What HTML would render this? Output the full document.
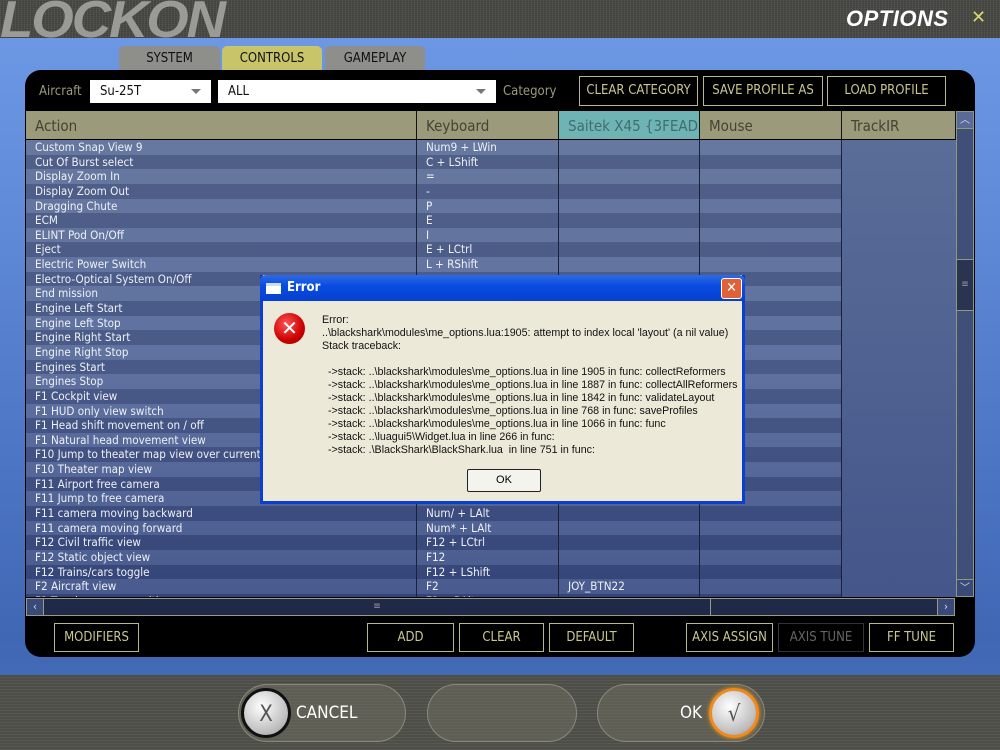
<!DOCTYPE html>
<html><head><meta charset="utf-8">
<style>
*{margin:0;padding:0;box-sizing:border-box}
body{width:1000px;height:750px;overflow:hidden;position:relative;font-family:"DejaVu Sans Condensed","DejaVu Sans","Liberation Sans",sans-serif;font-stretch:condensed;background:linear-gradient(180deg,#6f9ae6 0%,#5f8ad8 30%,#4d76c4 60%,#3f67b4 85%,#4a6fb8 100%)}
.abs{position:absolute}
.top{left:0;top:0;width:1000px;height:38px;background:#4a4a46;background-image:repeating-linear-gradient(90deg,rgba(255,255,255,.05) 0 1px,transparent 1px 3px),repeating-linear-gradient(0deg,rgba(0,0,0,.1) 0 1px,transparent 1px 2px)}
.logo{left:0;top:-10px;font:italic 900 52px "Liberation Sans",sans-serif;color:#9a9a96;letter-spacing:-2px;transform:scaleX(1.05);transform-origin:left}
.opt{left:846px;top:6px;font:italic bold 22px "Liberation Sans",sans-serif;color:#fff;letter-spacing:.5px}
.x{left:971px;top:7px;color:#d8d870;font:18px "DejaVu Sans",sans-serif}
.tab{top:46px;height:25px;background:#8e8e8a;border-radius:5px 5px 0 0;font-size:13px;color:#111;text-align:center;line-height:25px}
.panel{left:25px;top:70px;width:950px;height:587px;background:#000;border-radius:16px}
.lbl{color:#9a9a7c;font-size:13px}
.sel{background:#fff;height:23px;top:80px;font-size:13px;line-height:23px;padding-left:10px;color:#111}
.arr{position:absolute;right:10px;top:9px;width:0;height:0;border-left:5px solid transparent;border-right:5px solid transparent;border-top:5px solid #777}
.btn{border:1px solid #b8b88a;color:#c9c790;font-size:13px;text-align:center;background:#000;white-space:nowrap}
.hdr{top:111px;height:28px;background:#9b9a7a;color:#444434;font-size:15px;line-height:30px;padding-left:9px;border-right:1px solid #111}
.rows{left:26px;top:140px;width:930px;height:457px;overflow:hidden;background:linear-gradient(180deg,#5d709a 0%,#56699a 50%,#3e5088 100%)}
.r{height:14.65px;display:flex;font-size:11.6px;color:#eef0f6;line-height:14.65px;white-space:nowrap}
.r:nth-child(odd){background:rgba(255,255,255,.06)}
.r:nth-child(even){background:rgba(0,0,30,.14)}
.r span{display:block;overflow:hidden;padding-left:9px;border-right:1px solid #1a2238}
.c1{width:391px}.c2{width:142px}.c3{width:141px}.c4{width:142px}
.trk{left:842px;top:140px;width:114px;height:457px;background:linear-gradient(180deg,#5a6d98,#44568a)}
.dlg{left:260px;top:275px;width:485px;height:229px;background:#ece9d8;border:3px solid #0a3fd0;border-top:none}
.tb{left:-3px;top:0;width:485px;height:26px;background:linear-gradient(180deg,#2e6be6,#0a4ce0 40%,#0540d0);border-radius:6px 6px 0 0}
.bot{left:0;top:675px;width:1000px;height:75px;background:#4e4e48;background-image:repeating-linear-gradient(0deg,rgba(255,255,255,.06) 0 1px,transparent 1px 3px)}
.pill{top:684px;height:58px;border-radius:29px;border:1px solid #8a8a7a;background:rgba(110,110,96,.5)}
.circ{width:50px;height:50px;border-radius:25px;background:radial-gradient(circle at 40% 35%,#fff,#bbb 70%,#888);font-size:22px;text-align:center;line-height:48px;color:#555}
</style></head><body>
<div class="abs top"></div>
<div class="abs logo">LOCKON</div>
<div class="abs opt">OPTIONS</div>
<div class="abs x">✕</div>

<div class="abs tab" style="left:119px;width:101px">SYSTEM</div>
<div class="abs tab" style="left:222px;width:100px;background:#c8c46a">CONTROLS</div>
<div class="abs tab" style="left:325px;width:100px">GAMEPLAY</div>

<div class="abs panel"></div>
<div class="abs lbl" style="left:39px;top:84px">Aircraft</div>
<div class="abs sel" style="left:90px;width:121px">Su-25T<div class="arr"></div></div>
<div class="abs sel" style="left:218px;width:278px">ALL<div class="arr"></div></div>
<div class="abs lbl" style="left:503px;top:84px">Category</div>
<div class="abs btn" style="left:579px;top:76px;width:119px;height:30px;line-height:28px">CLEAR CATEGORY</div>
<div class="abs btn" style="left:703px;top:76px;width:120px;height:30px;line-height:28px">SAVE PROFILE AS</div>
<div class="abs btn" style="left:827px;top:76px;width:119px;height:30px;line-height:28px">LOAD PROFILE</div>

<div class="abs hdr" style="left:26px;width:391px">Action</div>
<div class="abs hdr" style="left:417px;width:142px">Keyboard</div>
<div class="abs hdr" style="left:559px;width:141px;background:#6fb4b4;color:#3f6e70;white-space:nowrap;overflow:hidden">Saitek X45 {3FEAD</div>
<div class="abs hdr" style="left:700px;width:142px">Mouse</div>
<div class="abs hdr" style="left:842px;width:114px">TrackIR</div>

<div class="abs rows">
<div class="r"><span class="c1">Custom Snap View  9</span><span class="c2">Num9 + LWin</span><span class="c3"></span><span class="c4"></span></div>
<div class="r"><span class="c1">Cut Of Burst select</span><span class="c2">C + LShift</span><span class="c3"></span><span class="c4"></span></div>
<div class="r"><span class="c1">Display Zoom In</span><span class="c2">=</span><span class="c3"></span><span class="c4"></span></div>
<div class="r"><span class="c1">Display Zoom Out</span><span class="c2">-</span><span class="c3"></span><span class="c4"></span></div>
<div class="r"><span class="c1">Dragging Chute</span><span class="c2">P</span><span class="c3"></span><span class="c4"></span></div>
<div class="r"><span class="c1">ECM</span><span class="c2">E</span><span class="c3"></span><span class="c4"></span></div>
<div class="r"><span class="c1">ELINT Pod On/Off</span><span class="c2">I</span><span class="c3"></span><span class="c4"></span></div>
<div class="r"><span class="c1">Eject</span><span class="c2">E + LCtrl</span><span class="c3"></span><span class="c4"></span></div>
<div class="r"><span class="c1">Electric Power Switch</span><span class="c2">L + RShift</span><span class="c3"></span><span class="c4"></span></div>
<div class="r"><span class="c1">Electro-Optical System On/Off</span><span class="c2"></span><span class="c3"></span><span class="c4"></span></div>
<div class="r"><span class="c1">End mission</span><span class="c2"></span><span class="c3"></span><span class="c4"></span></div>
<div class="r"><span class="c1">Engine Left Start</span><span class="c2"></span><span class="c3"></span><span class="c4"></span></div>
<div class="r"><span class="c1">Engine Left Stop</span><span class="c2"></span><span class="c3"></span><span class="c4"></span></div>
<div class="r"><span class="c1">Engine Right Start</span><span class="c2"></span><span class="c3"></span><span class="c4"></span></div>
<div class="r"><span class="c1">Engine Right Stop</span><span class="c2"></span><span class="c3"></span><span class="c4"></span></div>
<div class="r"><span class="c1">Engines Start</span><span class="c2"></span><span class="c3"></span><span class="c4"></span></div>
<div class="r"><span class="c1">Engines Stop</span><span class="c2"></span><span class="c3"></span><span class="c4"></span></div>
<div class="r"><span class="c1">F1 Cockpit view</span><span class="c2"></span><span class="c3"></span><span class="c4"></span></div>
<div class="r"><span class="c1">F1 HUD only view switch</span><span class="c2"></span><span class="c3"></span><span class="c4"></span></div>
<div class="r"><span class="c1">F1 Head shift movement on / off</span><span class="c2"></span><span class="c3"></span><span class="c4"></span></div>
<div class="r"><span class="c1">F1 Natural head movement view</span><span class="c2"></span><span class="c3"></span><span class="c4"></span></div>
<div class="r"><span class="c1">F10 Jump to theater map view over current object</span><span class="c2"></span><span class="c3"></span><span class="c4"></span></div>
<div class="r"><span class="c1">F10 Theater map view</span><span class="c2"></span><span class="c3"></span><span class="c4"></span></div>
<div class="r"><span class="c1">F11 Airport free camera</span><span class="c2"></span><span class="c3"></span><span class="c4"></span></div>
<div class="r"><span class="c1">F11 Jump to free camera</span><span class="c2"></span><span class="c3"></span><span class="c4"></span></div>
<div class="r"><span class="c1">F11 camera moving backward</span><span class="c2">Num/ + LAlt</span><span class="c3"></span><span class="c4"></span></div>
<div class="r"><span class="c1">F11 camera moving forward</span><span class="c2">Num* + LAlt</span><span class="c3"></span><span class="c4"></span></div>
<div class="r"><span class="c1">F12 Civil traffic view</span><span class="c2">F12 + LCtrl</span><span class="c3"></span><span class="c4"></span></div>
<div class="r"><span class="c1">F12 Static object view</span><span class="c2">F12</span><span class="c3"></span><span class="c4"></span></div>
<div class="r"><span class="c1">F12 Trains/cars toggle</span><span class="c2">F12 + LShift</span><span class="c3"></span><span class="c4"></span></div>
<div class="r"><span class="c1">F2 Aircraft view</span><span class="c2">F2</span><span class="c3">JOY_BTN22</span><span class="c4"></span></div>
<div class="r"><span class="c1">F2 Toggle camera position</span><span class="c2">F2 + RAlt</span><span class="c3"></span><span class="c4"></span></div>
</div>
<div class="abs trk"></div>

<div class="abs" style="left:956px;top:111px;width:18px;height:486px;background:#3f4f78;border:1px solid #8a9a80"></div>
<div class="abs" style="left:956px;top:111px;width:18px;height:18px;background:#5a6a98;border:1px solid #8a9a80;color:#dde;font-size:10px;text-align:center;line-height:18px">︿</div>
<div class="abs" style="left:956px;top:259px;width:18px;height:52px;background:#2a3350;border:1px solid #8a9a80;color:#99a;font-size:10px;text-align:center;line-height:50px">≡</div>
<div class="abs" style="left:956px;top:579px;width:18px;height:18px;background:#3a4a78;border:1px solid #8a9a80;color:#dde;font-size:10px;text-align:center;line-height:18px">﹀</div>
<div class="abs" style="left:26px;top:598px;width:929px;height:18px;background:#1e2a48;border:1px solid #9a9a80"></div>
<div class="abs" style="left:26px;top:598px;width:18px;height:18px;border:1px solid #9a9a80;background:#3a4a78;color:#dde;font-size:11px;text-align:center;line-height:16px">‹</div>
<div class="abs" style="left:44px;top:598px;width:667px;height:18px;border-right:1px solid #9a9a80;color:#99a;font-size:10px;text-align:center;line-height:17px">≡</div>
<div class="abs" style="left:937px;top:598px;width:18px;height:18px;border:1px solid #9a9a80;background:#3a4a78;color:#dde;font-size:11px;text-align:center;line-height:16px">›</div>

<div class="abs btn" style="left:54px;top:623px;width:85px;height:29px;line-height:28px">MODIFIERS</div>
<div class="abs btn" style="left:367px;top:623px;width:87px;height:29px;line-height:28px">ADD</div>
<div class="abs btn" style="left:459px;top:623px;width:85px;height:29px;line-height:28px">CLEAR</div>
<div class="abs btn" style="left:549px;top:623px;width:85px;height:29px;line-height:28px">DEFAULT</div>
<div class="abs btn" style="left:686px;top:623px;width:87px;height:29px;line-height:28px">AXIS ASSIGN</div>
<div class="abs btn" style="left:778px;top:623px;width:86px;height:29px;line-height:28px;border-color:#333;color:#666">AXIS TUNE</div>
<div class="abs btn" style="left:869px;top:623px;width:85px;height:29px;line-height:28px">FF TUNE</div>

<div class="abs dlg">
 <div class="abs tb"></div>
 <div class="abs" style="left:3px;top:8px;width:15px;height:11px;background:#fff;border-top:3px solid #cde"></div>
 <div class="abs" style="left:24px;top:5px;font:bold 13px 'DejaVu Sans Condensed','DejaVu Sans',sans-serif;color:#fff">Error</div>
 <div class="abs" style="left:458px;top:3px;width:21px;height:21px;background:#e0603a;border:1px solid #fff;border-radius:3px;color:#fff;font-size:14px;font-weight:bold;text-align:center;line-height:19px">✕</div>
 <div class="abs" style="left:11px;top:38px;width:31px;height:31px;border-radius:16px;background:radial-gradient(circle at 40% 35%,#f55,#c00 60%,#800);color:#fff;font:bold 20px 'DejaVu Sans',sans-serif;text-align:center;line-height:30px">✕</div>
 <div class="abs" style="left:59px;top:39px;font:10.7px 'Liberation Sans',sans-serif;color:#111;white-space:pre;line-height:13px">Error:
..\blackshark\modules\me_options.lua:1905: attempt to index local 'layout' (a nil value)
Stack traceback:

  -&gt;stack: ..\blackshark\modules\me_options.lua in line 1905 in func: collectReformers
  -&gt;stack: ..\blackshark\modules\me_options.lua in line 1887 in func: collectAllReformers
  -&gt;stack: ..\blackshark\modules\me_options.lua in line 1842 in func: validateLayout
  -&gt;stack: ..\blackshark\modules\me_options.lua in line 768 in func: saveProfiles
  -&gt;stack: ..\blackshark\modules\me_options.lua in line 1066 in func: func
  -&gt;stack: ..\luagui5\Widget.lua in line 266 in func:
  -&gt;stack: .\BlackShark\BlackShark.lua  in line 751 in func:</div>
 <div class="abs" style="left:204px;top:194px;width:74px;height:23px;border:1px solid #222;background:#f4f3ee;font:11px 'Liberation Sans',sans-serif;text-align:center;line-height:21px;border-radius:2px">OK</div>
</div>

<div class="abs bot"></div>
<div class="abs pill" style="left:238px;width:168px"></div>
<div class="abs pill" style="left:427px;width:150px"></div>
<div class="abs pill" style="left:597px;width:168px"></div>
<div class="abs circ" style="left:241px;top:688px;border:3px solid #111">X</div>
<div class="abs" style="left:296px;top:703px;color:#fff;font-size:17px">CANCEL</div>
<div class="abs" style="left:680px;top:703px;color:#fff;font-size:17px">OK</div>
<div class="abs circ" style="left:709px;top:688px;border:3px solid #f08a20;box-shadow:0 0 4px #f90">√</div>
</body></html>
